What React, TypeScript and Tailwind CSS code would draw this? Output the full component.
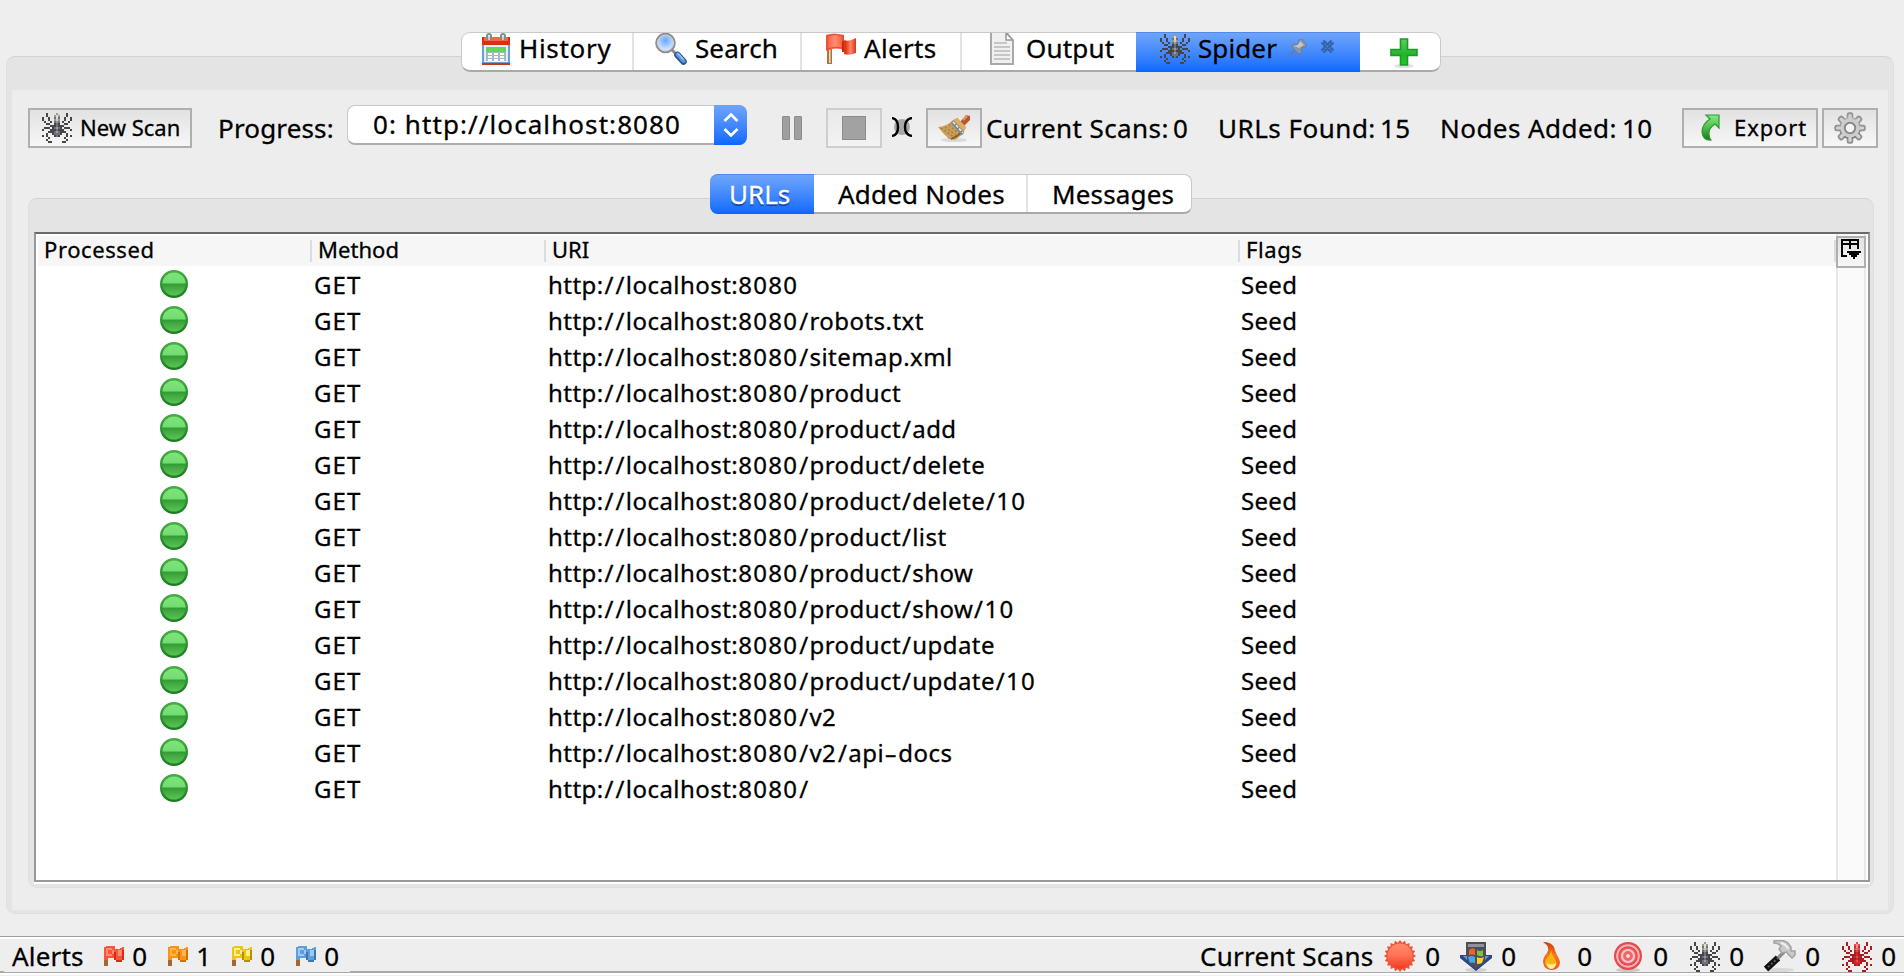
import type { ReactNode } from 'react';

const SPIDER = [
  '..d....l....d..',
  '..d...lwl...d..',
  'd..d..gwg..d..d',
  'd..d..lyl..d..d',
  '.d..d.glg.d..d.',
  '..dd..dgd..dd..',
  '....dddgddd....',
  '.ddd.dglgd.ddd.',
  'd...dddgddd...d',
  '...dddglgddd...',
  '..d..dgggd..d..',
  'd.d...dgd...d.d',
  '...d.......d...',
  '..d.........d..',
  '...dd.....dd...',
];

const DARK: Record<string, string> = { d: '#45454a', g: '#70707c', l: '#9a9a98', w: '#e4e0cc', y: '#cfcda4' };
const RED: Record<string, string> = { d: '#ab1c22', g: '#c9282d', l: '#e2484d', w: '#f49090', y: '#f06e70' };

function Spider({ red = false }: { red?: boolean }) {
  const palette = red ? RED : DARK;
  return (
    <svg className="block h-[30px] w-[30px] shrink-0" viewBox="0 0 15 15" shapeRendering="crispEdges">
      {SPIDER.flatMap((row, y) =>
        row.split('').map((c, x) =>
          c === '.' ? null : <rect key={`${x}-${y}`} x={x} y={y} width="1" height="1" fill={palette[c]} />,
        ),
      )}
    </svg>
  );
}

function Calendar() {
  return (
    <svg className="block h-8 w-7 shrink-0" viewBox="0 0 28 32">
      <rect x="0" y="12" width="28" height="20" fill="#6c9fd0" />
      <rect x="2" y="12" width="24" height="17" fill="#e3effa" />
      <rect x="0" y="4" width="28" height="8" fill="#d9300f" />
      <rect x="2" y="4" width="24" height="4" fill="#f4684a" />
      <rect x="0" y="30" width="28" height="2" fill="#c8341c" />
      <rect x="4" y="14" width="20" height="5" fill="#66d35c" />
      <rect x="4" y="19" width="20" height="9" fill="#a9b6c4" />
      <path d="M6 20h4v2H6zM12 20h4v2h-4zM18 20h4v2h-4zM6 23h4v2H6zM12 23h4v2h-4zM18 23h4v2h-4zM6 26h4v2H6zM12 26h4v2h-4zM18 26h4v2h-4z" fill="#fff" />
      <path d="M5 7V3q0-2 2-2t2 2v4M19 7V3q0-2 2-2t2 2v4" fill="none" stroke="#8b8b8b" strokeWidth="2" />
      <path d="M7 3v4M21 3v4" stroke="#e2dada" strokeWidth="1.5" />
    </svg>
  );
}

function Magnifier() {
  return (
    <svg className="block h-8 w-8 shrink-0" viewBox="0 0 32 32">
      <defs>
        <radialGradient id="lens" cx="50%" cy="35%" r="65%">
          <stop offset="0" stopColor="#69a6ff" />
          <stop offset="0.6" stopColor="#b4d6ff" />
          <stop offset="1" stopColor="#e8f4ff" />
        </radialGradient>
      </defs>
      <path d="M16 16l5 5" stroke="#8d8d8d" strokeWidth="3" />
      <circle cx="10.5" cy="10" r="9" fill="url(#lens)" stroke="#8e8e8e" strokeWidth="2.6" />
      <circle cx="10.5" cy="10" r="8" fill="none" stroke="#d6d6d6" strokeWidth="1" />
      <path d="M22.500 22l6 6.500" stroke="#27538c" strokeWidth="6.500" strokeLinecap="round" />
      <path d="M22.500 21.500l6 6.500" stroke="#5a97d6" strokeWidth="4" strokeLinecap="round" />
      <path d="M23 20.500l5 5.500" stroke="#9cc6ee" strokeWidth="1.500" strokeLinecap="round" />
    </svg>
  );
}

function BigFlag() {
  return (
    <svg className="block h-8 w-[30px] shrink-0" viewBox="0 0 30 32">
      <defs>
        <linearGradient id="bigflag" x1="0" x2="1">
          <stop offset="0" stopColor="#f4563a" />
          <stop offset="0.3" stopColor="#ff8e72" />
          <stop offset="0.56" stopColor="#fa5c3d" />
          <stop offset="0.64" stopColor="#d8310f" />
          <stop offset="0.82" stopColor="#ff8365" />
          <stop offset="1" stopColor="#d2361c" />
        </linearGradient>
      </defs>
      <path d="M1 16h5v15H1z" fill="#a87440" />
      <path d="M3 17h1.500v13H3z" fill="#f5ddb4" />
      <path d="M0 2q7-3 18 0v5q5 2 12-2v15q-7 3-12 1v-4q-9-3-18 1z" fill="url(#bigflag)" />
      <path d="M1 3q8-3 16 0v12q-8-2-16 1z" fill="none" stroke="#e2472c" />
      <path d="M17 8v11" stroke="#bf2c10" strokeWidth="2" />
    </svg>
  );
}

function SmallFlag({ a, b, c }: { a: string; b: string; c: string }) {
  return (
    <svg className="block h-5 w-5 shrink-0" viewBox="0 0 20 20" shapeRendering="crispEdges">
      <path d="M0 12h4v8H0z" fill="#a3662f" />
      <path d="M0 1h2V0h9v3h5V2h2V1h2v13h-2v2h-6v-2h-2v-2H4v2H0z" fill={b} />
      <path d="M2 2h6v2h2v4H8v2H2zM14 4h4v6h-4z" fill={a} />
      <path d="M4 4h4v4H4z" fill={b} />
      <path d="M10 6h2v8h-2zM18 4h2v10h-2zM12 14h6v2h-6z" fill={c} />
    </svg>
  );
}

function Page() {
  return (
    <svg className="block h-8 w-6 shrink-0" viewBox="0 0 24 32">
      <path d="M1 0v31h22V8l-6-8" fill="#f0f0f0" stroke="#a9a9a9" strokeWidth="2" />
      <path d="M16 0v7h7z" fill="#fff" stroke="#999" strokeWidth="1.500" />
      <path d="M4 10h13M4 14h16M4 18h16M4 22h16M4 26h16" stroke="#b8b8b8" strokeWidth="1.600" />
    </svg>
  );
}

function Pin() {
  return (
    <svg className="block h-[18px] w-[19px] shrink-0" viewBox="0 0 19 18">
      <path d="M0 17l8-6" stroke="#5f7fae" strokeWidth="2.500" />
      <path d="M11 0h3l4 5v3h-3l-2 3 1 3-3 1-7-7 1-3h4l2-2z" fill="#8995a8" stroke="#6d7b93" />
      <path d="M12 2l4 4-5 3-5-2 4-1z" fill="#c3c6cc" />
    </svg>
  );
}

function CloseMark() {
  return (
    <svg className="block h-[15px] w-[15px] shrink-0" viewBox="0 0 15 15">
      <path d="M2.500 2.500l10 10M12.500 2.500l-10 10" stroke="#2f62ab" strokeWidth="5" />
      <path d="M2.500 2.500l10 10M12.500 2.500l-10 10" stroke="#5582c2" strokeWidth="1.600" strokeDasharray="1.500 1.500" />
    </svg>
  );
}

function Plus() {
  return (
    <svg className="block h-[31px] w-[28px] shrink-0" viewBox="0 0 28 31">
      <defs>
        <linearGradient id="plus" x1="0" x2="0" y1="0" y2="1">
          <stop offset="0" stopColor="#5fce5f" />
          <stop offset="0.6" stopColor="#22b42c" />
          <stop offset="1" stopColor="#18cf22" />
        </linearGradient>
      </defs>
      <ellipse cx="14" cy="28" rx="10" ry="2" fill="#e0e0e0" />
      <path d="M10.500 1h7v10.500H27v6h-9.500V27h-7v-9.500H1v-6h9.500z" fill="url(#plus)" stroke="#1c9a27" strokeWidth="1.600" />
    </svg>
  );
}

function Broom() {
  return (
    <svg className="block h-7 w-8 shrink-0" viewBox="0 0 32 28">
      <ellipse cx="16" cy="26" rx="13" ry="2.200" fill="#dadada" />
      <path d="M22 8l6-7 4 1v4l-6 6z" fill="#b9562a" />
      <path d="M25 6l4-4" stroke="#e59a70" strokeWidth="2" />
      <path d="M15 6l4-2 9 9-3 7-8 6-6-1-6-6-5-6q8 0 15-7z" fill="#c9a05a" />
      <path d="M3 14l13 9M7 13l12 9M11 11l10 9" stroke="#a67a3a" strokeWidth="1.400" strokeDasharray="2 2" />
      <path d="M13 25l6-3 5-4" fill="none" stroke="#7d5a26" strokeWidth="1.600" />
      <path d="M14 8l11 12" stroke="#7c8494" strokeWidth="3.500" />
      <path d="M15 8l10 11" stroke="#e3e8f0" strokeWidth="1.600" strokeDasharray="3 1.500" />
      <path d="M18 5l9 10" stroke="#d9b066" strokeWidth="4" />
    </svg>
  );
}

function ExportArrow() {
  return (
    <svg className="block h-7 w-5 shrink-0" viewBox="0 0 20 28">
      <defs>
        <linearGradient id="exp" x1="0" x2="0" y1="0" y2="1">
          <stop offset="0" stopColor="#86e986" />
          <stop offset="0.45" stopColor="#55c452" />
          <stop offset="1" stopColor="#11771a" />
        </linearGradient>
      </defs>
      <path d="M5 1h13v13l-4-4q-6 4-6 9 0 5 2 7-8 1-9-8 0-8 8-13z" fill="url(#exp)" stroke="#2e9a33" strokeWidth="1.200" />
    </svg>
  );
}

function Gear() {
  return (
    <svg className="block h-8 w-8 shrink-0" viewBox="0 0 32 32">
      <defs>
        <linearGradient id="gear" x1="0" x2="0" y1="0" y2="1">
          <stop offset="0" stopColor="#b8b8b8" />
          <stop offset="1" stopColor="#757575" />
        </linearGradient>
      </defs>
      {[0, 45, 90, 135].map((r) => (
        <rect key={r} x="12.700" y="0.300" width="6.600" height="31.400" rx="2.500" fill="#939393" transform={`rotate(${r} 16 16)`} />
      ))}
      <circle cx="16" cy="16" r="11" fill="url(#gear)" />
      {[0, 45, 90, 135].map((r) => (
        <rect key={r} x="14.400" y="2" width="3.200" height="28" rx="1.400" fill="#d2d2d2" transform={`rotate(${r} 16 16)`} />
      ))}
      <circle cx="16" cy="16" r="9.500" fill="#cdcdcd" />
      <circle cx="16" cy="16" r="5.200" fill="#f4f4f4" stroke="#8a8a8a" strokeWidth="2" />
    </svg>
  );
}

function ColumnControl() {
  return (
    <svg className="block h-5 w-5" viewBox="0 0 20 20" shapeRendering="crispEdges">
      <path d="M0 0h18v10h-2V6h-6v4H8V6H2v10h4v2H0zM2 2v2h6V2zM10 2v2h6V2z" fill="#000" fillRule="evenodd" />
      <path d="M6 12h14v2h-2v2h-2v2h-2v2h-2v-2h-2v-2H8v-2H6z" fill="#000" />
    </svg>
  );
}

function Burst() {
  const points = Array.from({ length: 40 }, (_, i) => {
    const r = i % 2 ? 13.3 : 16;
    const t = (i * Math.PI) / 20;
    return `${(16 + r * Math.sin(t)).toFixed(2)},${(16 - r * Math.cos(t)).toFixed(2)}`;
  }).join(' ');
  return (
    <svg className="block h-8 w-8 shrink-0" viewBox="0 0 32 32">
      <defs>
        <linearGradient id="burst" x1="0" x2="0" y1="0" y2="1">
          <stop offset="0" stopColor="#ff8a6c" />
          <stop offset="0.45" stopColor="#ff7457" />
          <stop offset="1" stopColor="#f03c22" />
        </linearGradient>
      </defs>
      <polygon points={points} fill="#ee5238" />
      <circle cx="16" cy="16" r="12.500" fill="url(#burst)" />
    </svg>
  );
}

function Download() {
  return (
    <svg className="block h-[30px] w-8 shrink-0" viewBox="0 0 32 30">
      <ellipse cx="16" cy="28" rx="11" ry="2" fill="#d2d2d2" />
      <path d="M0 13h6V1h20v12h6v3L16 29 0 16z" fill="#2c4684" />
      <path d="M6 0h20v18l-10 9-10-9z" fill="#4c4f58" />
      <path d="M8 2h16v3H8z" fill="#8f9298" />
      <path d="M3 14h4v4zM29 14h-4v4z" fill="#7390c8" />
      <path d="M9 8q3-3 6-1v6q-3-1-6 0z" fill="#f0602c" />
      <path d="M17 8q3 2 6 0v6q-3 1-6-1z" fill="#7fc242" />
      <path d="M8 15q4-2 7 0v6q-3-1-5 0z" fill="#4aa5ea" />
      <path d="M17 15q3 2 7 0l-2 6q-2 1-5 1z" fill="#fccd2c" />
    </svg>
  );
}

function Flame() {
  return (
    <svg className="block h-7 w-[17px] shrink-0" viewBox="0 0 17 28">
      <defs>
        <linearGradient id="flame" x1="0" x2="0" y1="0" y2="1">
          <stop offset="0" stopColor="#d2360c" />
          <stop offset="0.45" stopColor="#f2791c" />
          <stop offset="1" stopColor="#f5502c" />
        </linearGradient>
      </defs>
      <path d="M0 0q8 0 11 5 1 4 3 8 3 5 3 8-1 7-8 7-8 0-9-8 0-5 4-9 4-6-4-11z" fill="url(#flame)" />
      <path d="M8 8q1 5 4 9 3 5 0 8-2 2-4 2-5-1-6-6 0-4 4-7 2-3 2-6z" fill="#fcb50c" />
      <path d="M4 21q4 3 9 0-1 6-5 6-4-1-4-6z" fill="#fff2a0" />
    </svg>
  );
}

function Target() {
  return (
    <svg className="block h-[30px] w-7 shrink-0" viewBox="0 0 28 30">
      <ellipse cx="14" cy="28" rx="12" ry="2" fill="#c9c9c9" />
      <circle cx="14" cy="14" r="14" fill="#e4494d" />
      <circle cx="14" cy="14" r="10.800" fill="none" stroke="#f8b4b4" strokeWidth="2" />
      <circle cx="14" cy="14" r="8.300" fill="#ee6468" />
      <circle cx="14" cy="14" r="6" fill="none" stroke="#fbc6c6" strokeWidth="2.200" />
      <circle cx="14" cy="14" r="2" fill="#fbd4d4" />
    </svg>
  );
}

function Hammer() {
  return (
    <svg className="block h-8 w-8 shrink-0" viewBox="0 0 32 32">
      <ellipse cx="16" cy="30" rx="14" ry="2" fill="#d9d9d9" />
      <path d="M12 20l8-8" stroke="#8d8d8d" strokeWidth="3.500" />
      <path d="M2 29l12-11" stroke="#111" strokeWidth="6.500" />
      <path d="M4 27l10-9" stroke="#5c5c5c" strokeWidth="2" strokeDasharray="2 2" />
      <path d="M10 1q9-2 14 2l3 4v4h4v4l-3 3-4-4-1-2-5 1-3-4 2-3q-3-3-7-3z" fill="#c9c9c9" stroke="#a2a2a2" strokeWidth="1.500" />
      <path d="M17 3q5 1 7 6" fill="none" stroke="#f1f1f1" strokeWidth="2" />
    </svg>
  );
}

const BUTTON = 'flex h-10 shrink-0 border-2 border-[#afafaf] bg-gradient-to-b from-[#e2e2e2] to-[#f7f7f7]';

function Tab({ className, children }: { className: string; children: ReactNode }) {
  return <div className={`flex h-[37px] shrink-0 items-start text-[26px] leading-[30px] ${className}`}>{children}</div>;
}

function Stat({ icon, value, className }: { icon: ReactNode; value: string; className: string }) {
  return (
    <div className={`flex shrink-0 items-start ${className}`}>
      {icon}
      <span className="ml-auto leading-[34px]">{value}</span>
    </div>
  );
}

const PATHS = [
  '',
  '/robots.txt',
  '/sitemap.xml',
  '/product',
  '/product/add',
  '/product/delete',
  '/product/delete/10',
  '/product/list',
  '/product/show',
  '/product/show/10',
  '/product/update',
  '/product/update/10',
  '/v2',
  '/v2/api-docs',
  '/',
];

/** Sets slashes, numbers and hyphens wider than the letters of an address. */
function Uri({ text }: { text: string }) {
  return (
    <>
      {text.split(/(\/|\d+|-)/).map((part, i) => {
        if (part === '/') return <span key={i} className="pl-[0.800px] tracking-[1.400px]">/</span>;
        if (part === '-') return <span key={i} className="mx-[3px] inline-block scale-x-[1.600]">-</span>;
        if (/^\d/.test(part)) return <span key={i} className="tracking-[1.300px]">{part}</span>;
        return part;
      })}
    </>
  );
}

function Dot() {
  return (
    <svg className="block h-7 w-7" viewBox="0 0 28 28">
      <defs>
        <linearGradient id="dot" x1="0" x2="0" y1="0" y2="1">
          <stop offset="0" stopColor="#7fe67c" />
          <stop offset="0.44" stopColor="#74dc70" />
          <stop offset="0.52" stopColor="#349c34" />
          <stop offset="0.62" stopColor="#3fa93f" />
          <stop offset="1" stopColor="#5bc858" />
        </linearGradient>
        <linearGradient id="rim" x1="0" x2="0" y1="0" y2="1">
          <stop offset="0" stopColor="#45ad45" />
          <stop offset="1" stopColor="#1e7d20" />
        </linearGradient>
      </defs>
      <circle cx="14" cy="14" r="12.800" fill="url(#dot)" stroke="url(#rim)" strokeWidth="2.400" />
    </svg>
  );
}

export default function App() {
  return (
    <div className="flex h-[976px] w-[1904px] flex-col overflow-hidden whitespace-nowrap bg-[#eeeeee] font-['Noto_Sans','Open_Sans',sans-serif] text-black [-webkit-text-stroke:0.3px_currentColor]">
      <div className="relative z-10 ml-[461px] mt-8 flex h-[40px] w-[980px] shrink-0 rounded-[9px] border border-b-2 border-[#c9c9c9] border-b-[#a9a9a9] bg-white">
        <Tab className="w-[172px] border-r-2 border-[#e2e2e2] pl-5">
          <Calendar />
          <span className="ml-[9px] tracking-[0.700px]">History</span>
        </Tab>
        <Tab className="w-[168px] border-r-2 border-[#e2e2e2] pl-[21px]">
          <Magnifier />
          <span className="ml-[8px] tracking-[0.100px]">Search</span>
        </Tab>
        <Tab className="w-[160px] border-r-2 border-[#e2e2e2] pl-[24px]">
          <BigFlag />
          <span className="ml-2 tracking-[0.350px]">Alerts</span>
        </Tab>
        <Tab className="w-[174px] pl-[28px]">
          <Page />
          <span className="ml-[12px] tracking-[0.200px]">Output</span>
        </Tab>
        <div className="-mb-[2px] -mt-px flex h-[40px] w-[224px] shrink-0 items-start border-t border-[#5089ea] bg-gradient-to-b from-[#6ea5fb] to-[#0668ff] pl-6 text-[26px] leading-[30px]">
          <div className="pt-px">
            <Spider />
          </div>
          <span className="ml-[8px] tracking-[0.100px]">Spider</span>
          <div className="ml-[11px] flex gap-[13px] pt-[6px]">
            <Pin />
            <CloseMark />
          </div>
        </div>
        <div className="pl-[30px] pt-[5px]">
          <Plus />
        </div>
      </div>

      <div className="-mt-4 ml-[6px] flex h-[858px] w-[1888px] shrink-0 flex-col rounded-[9px] border border-[#dfdfdf] border-t-[#d2d2d2] bg-[#e4e4e4] px-[5px] pt-[33px]">
        <div className="flex h-[820px] shrink-0 flex-col bg-[#ededed] px-4">
          <div className="flex h-[84px] shrink-0 items-start pt-[18px] text-[26px] leading-10">
            <div className={`${BUTTON} w-[164px] items-center pl-3 text-[22px]`}>
              <Spider />
              <span className="ml-[8px] pb-[2px] leading-9">New Scan</span>
            </div>
            <span className="ml-[26px] w-[129px] shrink-0 tracking-[0.150px]">Progress:</span>
            <div className="-mt-[3px] flex h-10 w-[400px] shrink-0 rounded-[8px] border border-b-2 border-[#c9c9c9] border-b-[#adadad] bg-white leading-[36px]">
              <span className="w-[366px] shrink-0 pl-[25px] tracking-[1.080px]">0: http://localhost:8080</span>
              <div className="-mb-[2px] -mr-px -mt-px flex h-10 w-[33px] shrink-0 items-center justify-center rounded-r-[8px] bg-gradient-to-b from-[#6ea5fb] to-[#0668ff]">
                <svg className="h-6 w-4" viewBox="0 0 16 24">
                  <path d="M1.500 8L8 1.500 14.500 8M1.500 16L8 22.500 14.500 16" fill="none" stroke="#fff" strokeWidth="2.600" />
                </svg>
              </div>
            </div>
            <div className="ml-[35px] mt-2 flex h-6 w-5 shrink-0 gap-1">
              <div className="w-2 rounded-[1px] border border-[#8c8c8c] bg-[#9f9f9f]" />
              <div className="w-2 rounded-[1px] border border-[#8c8c8c] bg-[#9f9f9f]" />
            </div>
            <div className="ml-[24px] flex h-10 w-14 shrink-0 items-center justify-center border-2 border-[#cecece] bg-gradient-to-b from-[#e9e9e9] to-[#f3f3f3]">
              <div className="h-6 w-6 border border-[#8c8c8c] bg-[#a2a2a2]" />
            </div>
            <svg className="ml-[10px] mt-[9px] h-5 w-5 shrink-0" viewBox="0 0 20 20">
              <circle cx="10" cy="10" r="8" fill="#a8a8a8" />
              <path d="M0 1q6 1 6 9t-6 9M20 1q-7 1-7 9t7 9" fill="none" stroke="#000" strokeWidth="2.400" />
            </svg>
            <div className={`${BUTTON} ml-[14px] w-14 pl-[10px] pt-1`}>
              <Broom />
            </div>
            <span className="ml-1 w-[187px] shrink-0 tracking-[0.400px]">Current Scans:</span>
            <span className="w-[45px] shrink-0">0</span>
            <span className="w-[162px] shrink-0 tracking-[0.500px]">URLs Found:</span>
            <span className="w-[60px] shrink-0 tracking-[0.500px]">15</span>
            <span className="w-[182px] shrink-0 tracking-[0.450px]">Nodes Added:</span>
            <span className="w-[60px] shrink-0 tracking-[0.500px]">10</span>
            <div className={`${BUTTON} w-[136px] pl-[17px] text-[22px]`}>
              <div className="pt-1">
                <ExportArrow />
              </div>
              <span className="ml-[13px] leading-[35px] tracking-[0.900px]">Export</span>
            </div>
            <div className={`${BUTTON} ml-1 w-14 pl-[10px] pt-[2px]`}>
              <Gear />
            </div>
          </div>

          <div className="relative z-10 ml-[682px] flex h-10 w-[482px] shrink-0 rounded-[8px] border border-b-2 border-[#c9c9c9] border-b-[#a9a9a9] bg-white text-[26px] leading-[38px]">
            <div className="-mb-[2px] -ml-px -mt-px h-10 w-[104px] shrink-0 rounded-l-[8px] border-t border-[#5089ea] bg-gradient-to-b from-[#6ea5fb] to-[#0668ff] pl-[19px] text-white [text-shadow:0_2px_1px_rgba(0,30,110,0.6)]">
              URLs
            </div>
            <div className="w-[214px] shrink-0 border-r-2 border-[#e2e2e2] pl-6 tracking-[0.200px]">Added Nodes</div>
            <div className="pl-[24px] tracking-[0.150px]">Messages</div>
          </div>

          <div className="-mt-4 flex h-[690px] w-[1846px] shrink-0 flex-col rounded-[9px] border border-[#dfdfdf] border-t-[#d2d2d2] bg-[#e4e4e4] px-[5px] pt-[33px]">
            <div className="h-[652px] w-[1836px] shrink-0 border-b-2 border-white">
              <div className="flex h-[650px] border-2 border-[#999999] border-t-[#6a6a6a] bg-white">
                <div className="flex w-[1800px] shrink-0 flex-col pt-[2px]">
                  <div className="ml-[2px] flex h-[30px] shrink-0 bg-[#f6f6f6] text-[22px] leading-[27px]">
                    <div className="w-[272px] shrink-0 pl-[6px] tracking-[0.600px]">Processed</div>
                    <div className="mt-1 h-[22px] w-[2px] shrink-0 bg-[#dcdcdc]" />
                    <div className="w-[232px] shrink-0 pl-[6px] tracking-[0.050px]">Method</div>
                    <div className="mt-1 h-[22px] w-[2px] shrink-0 bg-[#dcdcdc]" />
                    <div className="w-[692px] shrink-0 pl-[6px]">URI</div>
                    <div className="mt-1 h-[22px] w-[2px] shrink-0 bg-[#dcdcdc]" />
                    <div className="w-[594px] shrink-0 pl-[6px] tracking-[0.600px]">Flags</div>
                    <div className="mt-1 h-[22px] w-[2px] shrink-0 bg-[#dcdcdc]" />
                  </div>
                  {PATHS.map((path) => (
                    <div key={path} className="flex h-9 shrink-0 text-[24px] leading-[37px]">
                      <div className="w-[278px] shrink-0 pl-[124px] pt-1">
                        <Dot />
                      </div>
                      <div className="w-[234px] shrink-0 tracking-[1.100px]">GET</div>
                      <div className="w-[693px] shrink-0 tracking-[0.450px]">
                        <Uri text={`http://localhost:8080${path}`} />
                      </div>
                      <div className="tracking-[0.300px]">Seed</div>
                    </div>
                  ))}
                </div>
                <div className="flex w-[30px] shrink-0 flex-col border-x-2 border-[#e8e8e8] bg-[#fafafa] pt-[2px]">
                  <div className="-mx-[2px] h-8 border-2 border-[#afafaf] bg-gradient-to-b from-[#e2e2e2] to-[#f7f7f7] pl-[3px] pt-px">
                    <ColumnControl />
                  </div>
                </div>
              </div>
            </div>
          </div>
        </div>
      </div>

      <div className="mt-[22px] flex h-[37px] shrink-0 border-t border-[#9c9c9c] text-[26px]">
        <div className="h-full w-1 shrink-0 border-b-2 border-t-2 border-b-[#a9a9a9] border-t-white" />
        <div className="flex w-[346px] shrink-0 border-b border-t-2 border-b-[#a9a9a9] border-t-white pl-2">
          <span className="w-[92px] shrink-0 leading-[34px] tracking-[0.200px]">Alerts</span>
          <Stat className="w-[43px] [&>svg]:mt-[7px]" icon={<SmallFlag a="#ff8a72" b="#f8553a" c="#d52b10" />} value="0" />
          <Stat className="ml-[21px] w-[43px] [&>svg]:mt-[7px]" icon={<SmallFlag a="#ffb64a" b="#f99312" c="#d87000" />} value="1" />
          <Stat className="ml-[21px] w-[43px] [&>svg]:mt-[7px]" icon={<SmallFlag a="#fff08a" b="#f0c416" c="#b98f00" />} value="0" />
          <Stat className="ml-[21px] w-[43px] [&>svg]:mt-[7px]" icon={<SmallFlag a="#9ccaf2" b="#5f9edc" c="#3f74ae" />} value="0" />
        </div>
        <div className="w-[850px] shrink-0 border-b-2 border-t-2 border-b-[#a9a9a9] border-t-white" />
        <div className="flex w-[704px] shrink-0 border-b border-t-2 border-b-[#a9a9a9] border-t-white">
          <span className="w-[184px] shrink-0 leading-[34px] tracking-[0.250px]">Current Scans</span>
          <Stat className="w-[56px] [&>svg]:mt-px" icon={<Burst />} value="0" />
          <Stat className="ml-[20px] w-[56px] [&>svg]:mt-[3px]" icon={<Download />} value="0" />
          <Stat className="ml-[27px] w-[49px] [&>svg]:mt-[3px]" icon={<Flame />} value="0" />
          <Stat className="ml-[22px] w-[54px] [&>svg]:mt-[3px]" icon={<Target />} value="0" />
          <Stat className="ml-[22px] w-[54px] [&>svg]:mt-[3px]" icon={<Spider />} value="0" />
          <Stat className="ml-[20px] w-[56px] [&>svg]:mt-px" icon={<Hammer />} value="0" />
          <Stat className="ml-[22px] w-[54px] [&>svg]:mt-[3px]" icon={<Spider red />} value="0" />
        </div>
      </div>
      <div className="h-[2px] shrink-0 bg-white" />
    </div>
  );
}
